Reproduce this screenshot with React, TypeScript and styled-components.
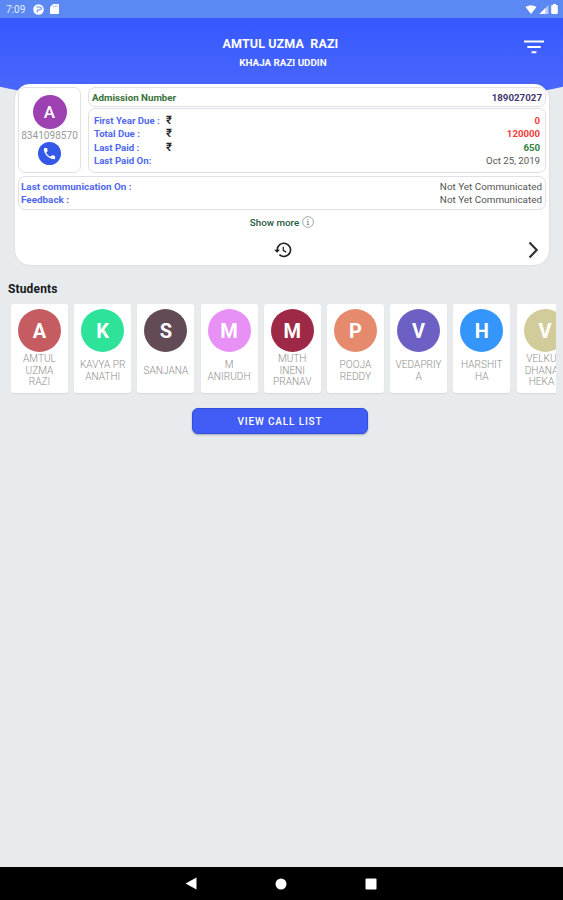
import React from "react";
import styled, { createGlobalStyle } from "styled-components";

const GlobalStyle = createGlobalStyle`
  * { box-sizing: border-box; }
  body { margin: 0; background: #e7ebee; font-family: Roboto, "Noto Sans", sans-serif; }
`;

const Screen = styled.div`
  width: 563px;
  height: 900px;
  display: flex;
  flex-direction: column;
  overflow: hidden;
  background: #e7ebee;
`;

const StatusBar = styled.div`
  flex: none;
  height: 18px;
  padding: 0 5px 0 6px;
  display: flex;
  align-items: center;
  justify-content: space-between;
  background: #5b88f2;
  color: #e6edff;
  font-size: 10px;
`;

const StatusGroup = styled.div<{ $gap: number }>`
  display: flex;
  align-items: center;
  gap: ${(p) => p.$gap}px;
`;

const Clock = styled.span`
  width: 20px;
`;

const Header = styled.header`
  flex: none;
  height: 74px;
  display: grid;
  grid-template-columns: 60px 1fr 60px;
  background: linear-gradient(#3558ff, #4b67fb);
  clip-path: ellipse(490px 150px at 50% -54px);
  color: #fff;
`;

const HeaderTitles = styled.div`
  grid-column: 2;
  text-align: center;
  font-weight: 700;
  padding-top: 17px;
`;

const Title = styled.h1`
  margin: 0;
  padding-right: 2px;
  font-size: 12.5px;
  line-height: 18px;
  font-weight: 700;
  white-space: pre;
  letter-spacing: 0.1px;
`;

const Subtitle = styled.div`
  margin-top: 2px;
  padding-left: 3px;
  font-size: 9.8px;
  line-height: 16px;
`;

const FilterButton = styled.button`
  width: 20px;
  height: 16px;
  margin: 21px 0 0 21px;
  padding: 0;
  border: 0;
  background: none;
  display: flex;
`;

const SummaryCard = styled.section`
  flex: none;
  width: 534px;
  height: 181px;
  margin: -8px 0 0 15px;
  padding: 3px 3px 0;
  position: relative;
  background: #fff;
  border-radius: 15px;
  box-shadow: 0 0 2px rgba(60, 70, 80, 0.18);
`;

const TopArea = styled.div`
  display: flex;
  gap: 7px;
`;

const Panel = styled.div`
  border: 1px solid #dfe1e4;
  border-radius: 7px;
`;

const ContactPanel = styled(Panel)`
  width: 63px;
  height: 86px;
  display: flex;
  flex-direction: column;
  align-items: center;
  padding-top: 7px;
`;

const Avatar = styled.div<{ $color: string; $size: number; $font: number }>`
  flex: none;
  width: ${(p) => p.$size}px;
  height: ${(p) => p.$size}px;
  border-radius: 50%;
  background: ${(p) => p.$color};
  color: #fff;
  display: flex;
  align-items: center;
  justify-content: center;
  font-size: ${(p) => p.$font}px;
  font-weight: 700;
`;

const ContactAvatar = styled(Avatar)`
  font-weight: 500;
`;

const Phone = styled.div`
  color: #999;
  font-size: 10.1px;
  line-height: 12px;
  margin: 1px 0 0;
`;

const CallButton = styled.button`
  width: 23px;
  height: 23px;
  border: 0;
  padding: 0;
  border-radius: 50%;
  background: #3458e8;
  display: flex;
  align-items: center;
  justify-content: center;
`;

const DetailColumn = styled.div`
  flex: 1;
`;

const AdmissionPanel = styled(Panel)`
  height: 20px;
  padding: 0 3px;
  display: flex;
  align-items: center;
  justify-content: space-between;
  font-size: 9.75px;
  font-weight: 700;
`;

const AdmissionLabel = styled.span`
  color: #37713a;
`;

const AdmissionValue = styled.span`
  color: #42386e;
`;

const FeesPanel = styled(Panel)`
  margin-top: 1px;
  height: 65px;
  padding: 5px 5px 0 5px;
`;

const FeeRow = styled.div`
  display: grid;
  grid-template-columns: 72px 10px 1fr;
  height: 13.4px;
  line-height: 13.4px;
  align-items: center;
  font-size: 9.65px;
`;

const Label = styled.span`
  color: #5068ee;
  font-weight: 700;
`;

const Value = styled.span<{ $color: string; $bold?: boolean }>`
  color: ${(p) => p.$color};
  font-weight: ${(p) => (p.$bold ? 700 : 400)};
  text-align: right;
`;

const Rupee = styled.span`
  font-size: 11.5px;
  font-weight: 500;
  color: #222;
`;

const CommunicationPanel = styled(Panel)`
  margin-top: 3px;
  height: 34px;
  padding: 3px 3px 0 2px;
`;

const CommunicationRow = styled.div`
  display: flex;
  justify-content: space-between;
  height: 13.2px;
  line-height: 13.2px;
  font-size: 9.9px;
`;

const ShowMore = styled.div`
  display: flex;
  align-items: center;
  justify-content: center;
  gap: 3px;
  height: 14px;
  margin-top: 5px;
  font-size: 9.8px;
  font-weight: 500;
  color: #285943;
`;

const ActionRow = styled.div`
  display: grid;
  grid-template-columns: 1fr 20px 1fr;
  align-items: center;
  justify-items: end;
  margin-top: 11px;
  padding: 0 6px;
  height: 20px;
`;

const SectionTitle = styled.h2`
  flex: none;
  margin: 16px 0 0 8px;
  font-size: 12px;
  line-height: 16px;
  font-weight: 700;
  color: #17191b;
  letter-spacing: 0.15px;
`;

const StudentList = styled.div`
  flex: none;
  display: flex;
  gap: 6.2px;
  height: 95px;
  margin: 4px 7px 0 7px;
  padding: 3px 0 0 4px;
  overflow: hidden;
`;

const StudentCard = styled.div`
  flex: none;
  width: 57px;
  height: 89px;
  padding-top: 5px;
  display: flex;
  flex-direction: column;
  align-items: center;
  background: #fff;
  border-radius: 3px;
  box-shadow: 0 1px 1px rgba(60, 70, 80, 0.1);
`;

const StudentName = styled.div<{ $shift?: number }>`
  height: 37px;
  margin-left: ${(p) => p.$shift ?? 0}px;
  display: flex;
  align-items: center;
  text-align: center;
  white-space: pre;
  color: #8e8e8e;
  font-size: 10.1px;
  font-weight: 300;
  line-height: 11.5px;
`;

const CallListButton = styled.button`
  flex: none;
  align-self: center;
  width: 176px;
  height: 26px;
  margin: 12px 3px 0 0;
  padding: 0;
  border: 1px solid #3050dc;
  border-radius: 6px;
  background: #425df5;
  box-shadow: 0 1px 2px rgba(40, 50, 80, 0.35);
  color: #fff;
  font-family: inherit;
  font-size: 10px;
  font-weight: 500;
  letter-spacing: 0.85px;
`;

const NavBar = styled.nav`
  flex: none;
  height: 33px;
  margin-top: auto;
  padding-right: 1px;
  display: flex;
  align-items: center;
  justify-content: center;
  gap: 78px;
  background: #000;
`;

const students = [
  { name: "AMTUL\nUZMA\nRAZI", initial: "A", color: "#c55c61" },
  { name: "KAVYA PR\nANATHI", initial: "K", color: "#2fe29a" },
  { name: "SANJANA", initial: "S", color: "#624b57" },
  { name: "M\nANIRUDH", initial: "M", color: "#e790f6" },
  { name: "MUTH\nINENI\nPRANAV", initial: "M", color: "#9d2946" },
  { name: "POOJA\nREDDY", initial: "P", color: "#e68a6d" },
  { name: "VEDAPRIY\nA", initial: "V", color: "#6d60c5" },
  { name: "HARSHIT\nHA", initial: "H", color: "#3495fb" },
  { name: "VELKU\nDHANA\nHEKA", initial: "V", color: "#d2cc9b", shift: -7 },
];

const fees = [
  { label: "First Year Due :", value: "0", color: "#f23b3b", money: true },
  { label: "Total Due :", value: "120000", color: "#f23b3b", money: true },
  { label: "Last Paid :", value: "650", color: "#33813b", money: true },
  { label: "Last Paid On:", value: "Oct 25, 2019", color: "#555", money: false },
];

const communication = [
  { label: "Last communication On :", value: "Not Yet Communicated" },
  { label: "Feedback :", value: "Not Yet Communicated" },
];

const AppDot = () => (
  <svg width="11" height="11" viewBox="0 0 11 11">
    <circle cx="5.5" cy="5.5" r="5.3" fill="#fff" />
    <path d="M3.3 3h3.6q1.4 0 1.4 1.4T6.9 5.8H5L3.8 8.2" fill="none" stroke="#5b88f2" strokeWidth="1.1" />
  </svg>
);

const SdCard = () => (
  <svg width="9" height="10" viewBox="0 0 9 10">
    <path d="M3 0h5q1 0 1 1v8q0 1-1 1H1q-1 0-1-1V3z" fill="#fff" />
    <path d="M3.5 1.4v1.8M5.3 1.4v1.8M7 1.4v1.8" stroke="#8aabf5" strokeWidth=".8" />
  </svg>
);

const Wifi = () => (
  <svg width="12" height="9" viewBox="0 0 12 9">
    <path d="M.5 2Q6-1.7 11.5 2L6 9z" fill="#fff" />
  </svg>
);

const Signal = () => (
  <svg width="10" height="9" viewBox="0 0 10 9">
    <path d="M9.5 0v9H.5z" fill="#b6caf9" />
    <path d="M6.3 3.1V9H.5z" fill="#fff" />
  </svg>
);

const Battery = () => (
  <svg width="7" height="10" viewBox="0 0 7 10">
    <path d="M2 0h3v1h1q.8 0 .8.8V9q0 1-1 1H1.2q-1 0-1-1V1.8Q.2 1 1 1h1z" fill="#fff" />
  </svg>
);

const FilterIcon = () => (
  <svg width="20" height="16" viewBox="0 0 20 16">
    <path d="M0 2.4h20M3.3 8h13.4M7.6 13.3h4.8" stroke="#fff" strokeWidth="2" />
  </svg>
);

const PhoneIcon = () => (
  <svg width="15" height="15" viewBox="0 0 24 24">
    <path
      d="M6.62 10.79a15.15 15.15 0 0 0 6.59 6.59l2.2-2.2a1 1 0 0 1 1.02-.24c1.12.37 2.33.57 3.57.57a1 1 0 0 1 1 1V20a1 1 0 0 1-1 1A17 17 0 0 1 3 4a1 1 0 0 1 1-1h3.5a1 1 0 0 1 1 1c0 1.25.2 2.45.57 3.57a1 1 0 0 1-.25 1.02z"
      fill="#fff"
    />
  </svg>
);

const InfoIcon = () => (
  <svg width="12" height="12" viewBox="0 0 12 12" fill="none" stroke="#788983">
    <circle cx="6" cy="6" r="5.4" strokeWidth=".7" />
    <path d="M6 5.2v3.5M6 3v1M4.8 5.4H6M4.8 8.6h2.4" strokeWidth=".9" />
  </svg>
);

const HistoryIcon = () => (
  <svg width="18" height="18" viewBox="0 0 18 18" fill="none" stroke="#1f1f1f">
    <path d="M3.3 9A6.6 6.6 0 1 1 5.4 13.7" strokeWidth="1.6" />
    <path d="M.2 8.8h5.8L3.1 11.8z" fill="#1f1f1f" stroke="none" />
    <path d="M9.3 5.7v3.7l2.8 1.7" strokeWidth="1.3" />
  </svg>
);

const ChevronIcon = () => (
  <svg width="12" height="18" viewBox="0 0 12 18">
    <path d="M1.5 1.5 8.7 9 1.5 16.5" fill="none" stroke="#333" strokeWidth="2.2" />
  </svg>
);

export default function App() {
  return (
    <Screen>
      <GlobalStyle />
      <StatusBar>
        <StatusGroup $gap={6.5}>
          <Clock>7:09</Clock>
          <AppDot />
          <SdCard />
        </StatusGroup>
        <StatusGroup $gap={2}>
          <Wifi />
          <Signal />
          <Battery />
        </StatusGroup>
      </StatusBar>
      <Header>
        <HeaderTitles>
          <Title>{"AMTUL UZMA  RAZI"}</Title>
          <Subtitle>KHAJA RAZI UDDIN</Subtitle>
        </HeaderTitles>
        <FilterButton aria-label="Filter">
          <FilterIcon />
        </FilterButton>
      </Header>
      <SummaryCard>
        <TopArea>
          <ContactPanel>
            <ContactAvatar $color="#9c40b2" $size={34} $font={17}>A</ContactAvatar>
            <Phone>8341098570</Phone>
            <CallButton aria-label="Call">
              <PhoneIcon />
            </CallButton>
          </ContactPanel>
          <DetailColumn>
            <AdmissionPanel>
              <AdmissionLabel>Admission Number</AdmissionLabel>
              <AdmissionValue>189027027</AdmissionValue>
            </AdmissionPanel>
            <FeesPanel>
              {fees.map((fee) => (
                <FeeRow key={fee.label}>
                  <Label>{fee.label}</Label>
                  <Rupee>{fee.money ? "₹" : ""}</Rupee>
                  <Value $color={fee.color} $bold={fee.money}>{fee.value}</Value>
                </FeeRow>
              ))}
            </FeesPanel>
          </DetailColumn>
        </TopArea>
        <CommunicationPanel>
          {communication.map((row) => (
            <CommunicationRow key={row.label}>
              <Label>{row.label}</Label>
              <Value $color="#555">{row.value}</Value>
            </CommunicationRow>
          ))}
        </CommunicationPanel>
        <ShowMore>
          Show more <InfoIcon />
        </ShowMore>
        <ActionRow>
          <span />
          <HistoryIcon />
          <ChevronIcon />
        </ActionRow>
      </SummaryCard>
      <SectionTitle>Students</SectionTitle>
      <StudentList>
        {students.map((student) => (
          <StudentCard key={student.name}>
            <Avatar $color={student.color} $size={43} $font={20}>{student.initial}</Avatar>
            <StudentName $shift={student.shift}>{student.name}</StudentName>
          </StudentCard>
        ))}
      </StudentList>
      <CallListButton>VIEW CALL LIST</CallListButton>
      <NavBar>
        <svg width="12" height="13" viewBox="0 0 12 13">
          <path d="M.5 6.5 11.5.5v12z" fill="#fff" />
        </svg>
        <svg width="12" height="12" viewBox="0 0 12 12">
          <circle cx="6" cy="6" r="5.5" fill="#fff" />
        </svg>
        <svg width="12" height="12" viewBox="0 0 12 12">
          <rect x=".5" y=".5" width="11" height="11" rx="1" fill="#fff" />
        </svg>
      </NavBar>
    </Screen>
  );
}
